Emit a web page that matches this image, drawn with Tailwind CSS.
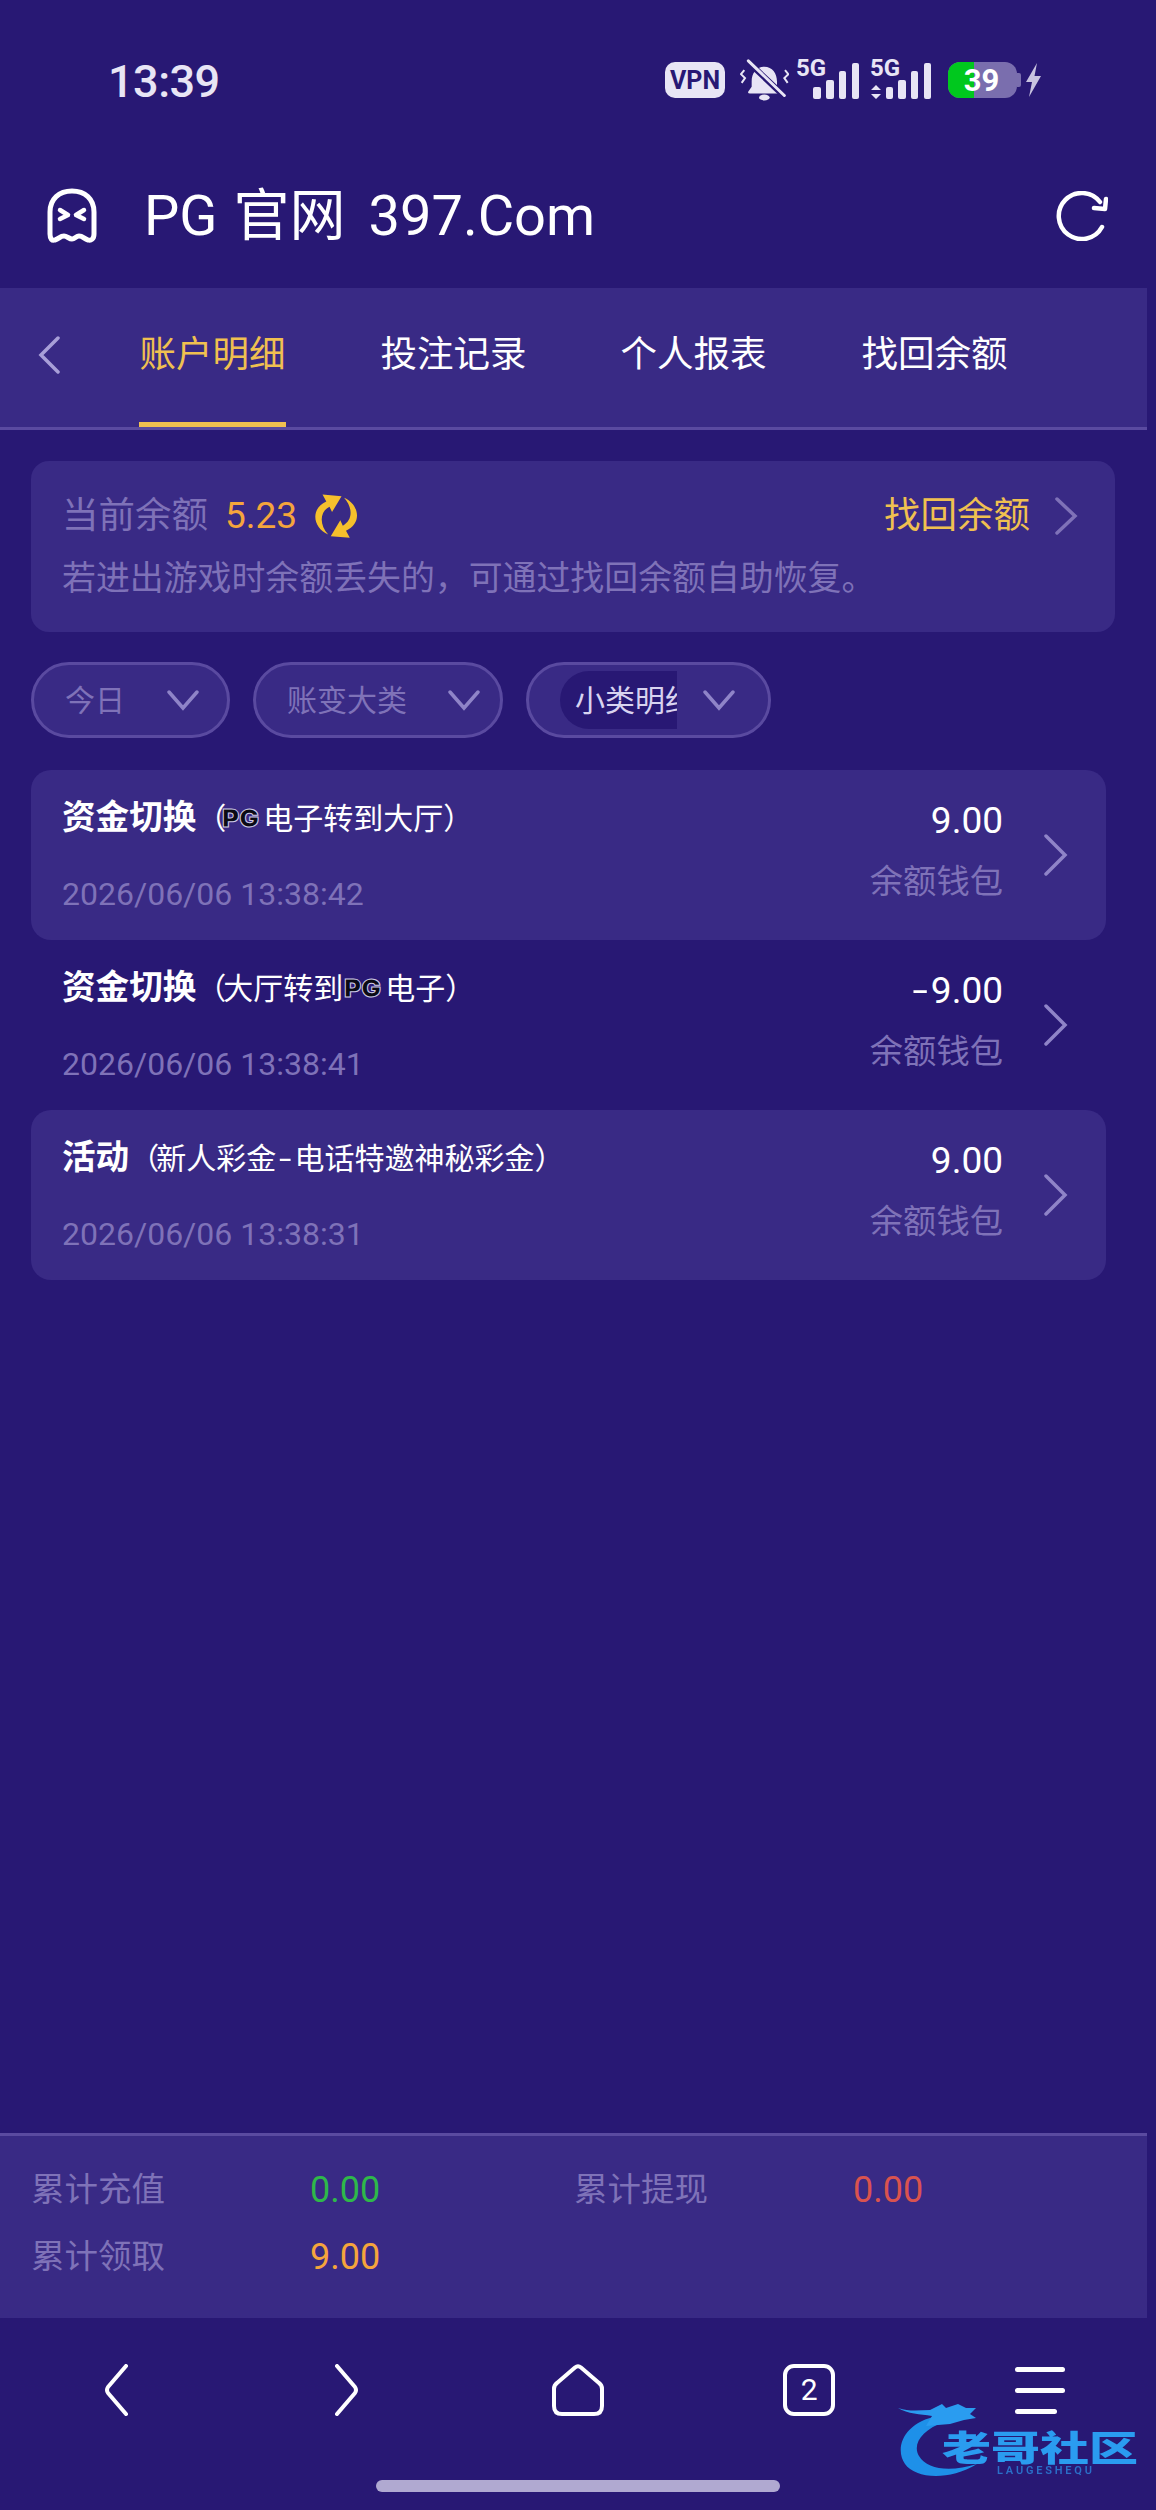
<!DOCTYPE html>
<html lang="zh-CN">

<head>
    <meta charset="UTF-8">
    <meta name="viewport" content="width=device-width, initial-scale=1.0">
    <title>PG官网 397.Com</title>
    <script src="https://cdn.jsdelivr.net/npm/@tailwindcss/browser@4"></script>
</head>

<body class="bg-[#281874]">
    <div class="relative flex flex-col w-[1156px] h-[2510px] overflow-hidden bg-[#281874] font-['Roboto','Noto_Sans_CJK_SC',sans-serif]">

        <!-- Status bar -->
        <div class="flex items-center h-[160px] pl-[108px] pr-[114px] py-[58px] text-[#e8e5f5]">
            <span class="mt-[3px] text-[45px] font-medium leading-none tracking-[-0.5px]">13:39</span>
            <div class="flex items-center ml-auto">
                <span class="flex items-center justify-center w-[60px] h-[36px] rounded-[10px] bg-[#e8e5f5] text-[#281874] text-[25px] font-bold leading-none">VPN</span>
                <svg class="ml-[15px]" width="49" height="42" viewBox="305 55 147 125">
                    <path d="M378 78c-24 0-38 20-38 44v16l-10 14q-3 6 5 6h86q8 0 5-6l-10-14v-16c0-24-14-44-38-44z" fill="#e8e5f5" />
                    <ellipse cx="378" cy="170" rx="16" ry="9" fill="#e8e5f5" />
                    <path d="M322 56L442 170" stroke="#281874" stroke-width="18" />
                    <path d="M330 60L438 164" stroke="#e8e5f5" stroke-width="9" stroke-linecap="round" />
                    <path d="M318 88l-10 12 12 12-10 14M440 88l10 12-12 12 10 14" fill="none" stroke="#e8e5f5" stroke-width="6" />
                </svg>
                <svg class="ml-[7px] overflow-visible" width="64" height="44" viewBox="0 0 64 44">
                    <text x="0" y="18" font-size="24" font-weight="700" fill="#e8e5f5" font-family="Roboto">5G</text>
                    <rect x="17" y="29" width="8" height="12" rx="2" fill="#e8e5f5" />
                    <rect x="30" y="22" width="8" height="19" rx="2" fill="#e8e5f5" />
                    <rect x="43" y="13" width="7" height="28" rx="2" fill="#e8e5f5" />
                    <rect x="56" y="5" width="7" height="36" rx="2" fill="#e8e5f5" />
                </svg>
                <svg class="ml-[10px] overflow-visible" width="62" height="44" viewBox="0 0 62 44">
                    <text x="0" y="18" font-size="24" font-weight="700" fill="#e8e5f5" font-family="Roboto">5G</text>
                    <path d="M1 32l5-5 5 5zM1 36l5 5 5-5z" fill="#e8e5f5" />
                    <rect x="16" y="29" width="7" height="12" rx="2" fill="#e8e5f5" />
                    <rect x="28" y="22" width="8" height="19" rx="2" fill="#e8e5f5" />
                    <rect x="41" y="13" width="7" height="28" rx="2" fill="#e8e5f5" />
                    <rect x="54" y="5" width="7" height="36" rx="2" fill="#e8e5f5" />
                </svg>
                <div class="relative flex items-center justify-center ml-[16px] w-[69px] h-[36px] rounded-[12px] overflow-hidden bg-[#7a6eae]">
                    <div class="absolute left-0 top-0 bottom-0 w-[26px] bg-[#00c81e]"></div>
                    <span class="relative text-white text-[31px] font-bold leading-none pr-[2px]">39</span>
                </div>
                <div class="w-[4px] h-[14px] rounded-r-[2px] bg-[#7a6eae]"></div>
                <svg class="ml-[4px]" width="17" height="34" viewBox="0 0 17 34">
                    <path d="M12 0L1 19h6L4 34l12-21H9.500z" fill="#c8c3e0" />
                </svg>
            </div>
        </div>

        <!-- Title bar -->
        <div class="flex items-center h-[128px] pb-[16px] pl-[47px] pr-[48px]">
            <svg width="50" height="56" viewBox="0 0 50 56" fill="none" stroke="white" stroke-width="5" stroke-linecap="round" stroke-linejoin="round">
                <path d="M3 24C3 11 12 3 25 3s22 8 22 21v22c0 5-3 7-6 6-4-1-5-4-9-4-3 0-4 3-7 3s-5-3-8-3c-4 0-5 3-9 4-3 1-5-1-5-6z" />
                <path d="M13 22l8 5-8 4M37 22l-8 5 8 4" stroke-width="4.500" />
            </svg>
            <span class="ml-[47px] text-[56px] leading-none text-white whitespace-nowrap">PG<span class="ml-[16px]">官网</span><span class="ml-[23px]">397.Com</span></span>
            <svg class="ml-auto" width="52" height="50" viewBox="0 0 52 50" fill="none" stroke="white" stroke-width="4.500" stroke-linecap="round" stroke-linejoin="round">
                <path d="M46 36A23 23 0 1 1 44 11" />
                <path d="M50 8L49 18L38 17" />
            </svg>
        </div>

        <!-- Tabs -->
        <div class="flex items-stretch w-[1147px] h-[142px] pl-[38px] bg-[#392a85] border-b-[3px] border-[#5a4aa0]">
            <svg class="self-center mb-[5px]" width="22" height="38" viewBox="0 0 22 38" fill="none" stroke="#a89fd8" stroke-width="3.500" stroke-linecap="round">
                <path d="M20 2L3 19l17 17" />
            </svg>
            <a class="flex items-center justify-center w-[147px] ml-[79px] pt-[1px] border-b-[5px] border-[#f0c050] text-[36.500px] whitespace-nowrap text-[#f0c050]">账户明细</a>
            <a class="flex items-center justify-center w-[147px] ml-[94px] pt-[1px] border-b-[5px] border-transparent text-[36.500px] whitespace-nowrap text-white">投注记录</a>
            <a class="flex items-center justify-center w-[147px] ml-[93px] pt-[1px] border-b-[5px] border-transparent text-[36.500px] whitespace-nowrap text-white">个人报表</a>
            <a class="flex items-center justify-center w-[147px] ml-[94px] pt-[1px] border-b-[5px] border-transparent text-[36.500px] whitespace-nowrap text-white">找回余额</a>
        </div>

        <!-- Balance card -->
        <div class="ml-[31px] mt-[31px] w-[1084px] h-[171px] px-[31px] pt-[33px] rounded-[18px] bg-[#392a85]">
            <div class="flex items-center h-[44px]">
                <span class="text-[36.500px] text-[#7f72b8]">当前余额</span>
                <span class="ml-[17px] text-[37px] text-[#f5a53c]">5.23</span>
                <svg class="ml-[16px]" width="46" height="46" viewBox="70 35 145 145" fill="#f6c02c">
                    <path d="M118 166C70 145 60 85 112 62L100 40L160 45L130 95L122 78C90 95 90 135 118 166Z" />
                    <path d="M168 50C216 71 226 131 174 154L186 176L126 171L156 121L164 138C196 121 196 81 168 50Z" />
                </svg>
                <span class="ml-auto text-[36.500px] text-[#f0c050]">找回余额</span>
                <svg class="ml-[24px] mr-[6px]" width="24" height="38" viewBox="0 0 24 38" fill="none" stroke="#7f72b8" stroke-width="3.500" stroke-linecap="round">
                    <path d="M3 2l18 17L3 36" />
                </svg>
            </div>
            <p class="mt-[19px] h-[44px] flex items-center text-[33.900px] text-[#7f72b8] whitespace-nowrap">若进出游戏时余额丢失的，可通过找回余额自助恢复。</p>
        </div>

        <!-- Filters -->
        <div class="flex ml-[31px] mt-[30px] gap-[23px]">
            <div class="flex items-center w-[199px] h-[76px] pl-[31px] rounded-full border-[3px] border-[#5a4aa0] bg-[#392a85] text-[30px] text-[#7f72b8]">
                <span>今日</span>
                <svg class="ml-[42px]" width="32" height="22" viewBox="0 0 32 22" fill="none" stroke="#8f84c8" stroke-width="3.500" stroke-linecap="round">
                    <path d="M2 3l14 16L30 3" />
                </svg>
            </div>
            <div class="flex items-center w-[250px] h-[76px] pl-[31px] rounded-full border-[3px] border-[#5a4aa0] bg-[#392a85] text-[30px] text-[#7f72b8]">
                <span>账变大类</span>
                <svg class="ml-[41px]" width="32" height="22" viewBox="0 0 32 22" fill="none" stroke="#8f84c8" stroke-width="3.500" stroke-linecap="round">
                    <path d="M2 3l14 16L30 3" />
                </svg>
            </div>
            <div class="flex items-center w-[245px] h-[76px] pl-[31px] rounded-full border-[3px] border-[#5a4aa0] bg-[#392a85] text-[30px] text-[#d8d3f0]">
                <div class="w-[117px] h-[58px] pl-[15px] flex items-center overflow-hidden whitespace-nowrap rounded-l-[29px] bg-[#281874]">小类明细</div>
                <svg class="ml-[26px]" width="32" height="22" viewBox="0 0 32 22" fill="none" stroke="#8f84c8" stroke-width="3.500" stroke-linecap="round">
                    <path d="M2 3l14 16L30 3" />
                </svg>
            </div>
        </div>

        <!-- Records -->
        <div class="ml-[31px] mt-[32px] w-[1075px]">
            <div class="flex items-center h-[170px] pl-[31px] pr-[38px] rounded-[20px] bg-[#392a85]">
                <div class="pt-[2px]">
                    <div class="flex items-center h-[44px] whitespace-nowrap text-white">
                        <span class="text-[33.600px] font-bold">资金切换</span>
                        <span class="text-[30px]">（</span>
                        <svg width="38" height="22" viewBox="0 0 38 22" class="-ml-[4px] overflow-visible">
                            <text x="0" y="19" font-size="25" font-weight="900" font-family="Inter" fill="#0a0a14" stroke="#cfcbe6" stroke-width="1" textLength="37" lengthAdjust="spacingAndGlyphs">PG</text>
                        </svg>
                        <span class="ml-[3px] text-[30px]">电子转到大厅）</span>
                    </div>
                    <div class="mt-[31px] text-[32px] leading-[44px] text-[#7f72b8]">2026/06/06 13:38:42</div>
                </div>
                <div class="ml-auto flex flex-col items-end pb-[7px]">
                    <span class="text-[37px] leading-[44px] text-white">9.00</span>
                    <span class="mt-[17px] text-[33.300px] leading-[44px] text-[#7f72b8]">余额钱包</span>
                </div>
                <svg class="ml-[40px]" width="25" height="42" viewBox="0 0 25 42" fill="none" stroke="#8f84c8" stroke-width="3.500" stroke-linecap="round">
                    <path d="M3 2l19 19L3 40" />
                </svg>
            </div>

            <div class="flex items-center h-[170px] pl-[31px] pr-[38px]">
                <div class="pt-[2px]">
                    <div class="flex items-center h-[44px] whitespace-nowrap text-white">
                        <span class="text-[33.600px] font-bold">资金切换</span>
                        <span class="text-[30px]">（</span>
                        <span class="-ml-[3px] text-[30px]">大厅转到</span>
                        <svg width="38" height="22" viewBox="0 0 38 22" class="ml-[1px] overflow-visible">
                            <text x="0" y="19" font-size="25" font-weight="900" font-family="Inter" fill="#0a0a14" stroke="#cfcbe6" stroke-width="1" textLength="37" lengthAdjust="spacingAndGlyphs">PG</text>
                        </svg>
                        <span class="ml-[3px] text-[30px]">电子）</span>
                    </div>
                    <div class="mt-[31px] text-[32px] leading-[44px] text-[#7f72b8]">2026/06/06 13:38:41</div>
                </div>
                <div class="ml-auto flex flex-col items-end pb-[7px]">
                    <span class="text-[37px] leading-[44px] text-white"><span class="inline-block mr-[6px] scale-x-[1.5]">-</span>9.00</span>
                    <span class="mt-[17px] text-[33.300px] leading-[44px] text-[#7f72b8]">余额钱包</span>
                </div>
                <svg class="ml-[40px]" width="25" height="42" viewBox="0 0 25 42" fill="none" stroke="#8f84c8" stroke-width="3.500" stroke-linecap="round">
                    <path d="M3 2l19 19L3 40" />
                </svg>
            </div>

            <div class="flex items-center h-[170px] pl-[31px] pr-[38px] rounded-[20px] bg-[#392a85]">
                <div class="pt-[2px]">
                    <div class="flex items-center h-[44px] whitespace-nowrap text-white">
                        <span class="text-[33.600px] font-bold">活动</span>
                        <span class="text-[30px]">（</span>
                        <span class="-ml-[3px] text-[30px]">新人彩金<span class="inline-block mx-[5px] scale-x-[1.5]">-</span>电话特邀神秘彩金）</span>
                    </div>
                    <div class="mt-[31px] text-[32px] leading-[44px] text-[#7f72b8]">2026/06/06 13:38:31</div>
                </div>
                <div class="ml-auto flex flex-col items-end pb-[7px]">
                    <span class="text-[37px] leading-[44px] text-white">9.00</span>
                    <span class="mt-[17px] text-[33.300px] leading-[44px] text-[#7f72b8]">余额钱包</span>
                </div>
                <svg class="ml-[40px]" width="25" height="42" viewBox="0 0 25 42" fill="none" stroke="#8f84c8" stroke-width="3.500" stroke-linecap="round">
                    <path d="M3 2l19 19L3 40" />
                </svg>
            </div>
        </div>

        <!-- Totals -->
        <div class="mt-auto grid grid-cols-[279px_264px_279px_auto] content-start gap-y-[23px] w-[1147px] h-[185px] pl-[31px] pt-[32px] border-t-[3px] border-[#5a4aa0] bg-[#392a85] text-[33.500px] leading-[44px]">
            <span class="text-[#7f72b8]">累计充值</span>
            <span class="text-[36px] text-[#2fb84a]">0.00</span>
            <span class="text-[#7f72b8]">累计提现</span>
            <span class="text-[36px] text-[#d9534f]">0.00</span>
            <span class="text-[#7f72b8]">累计领取</span>
            <span class="text-[36px] text-[#f5a53c]">9.00</span>
        </div>

        <!-- Browser toolbar -->
        <div class="grid grid-cols-5 justify-items-center items-center h-[52px] mt-[46px]">
            <svg width="24" height="52" viewBox="0 0 24 52" fill="none" stroke="white" stroke-width="4" stroke-linecap="round" stroke-linejoin="round">
                <path d="M22 2L4 23q-2 3 0 6l18 21" />
            </svg>
            <svg width="24" height="52" viewBox="0 0 24 52" fill="none" stroke="white" stroke-width="4" stroke-linecap="round" stroke-linejoin="round">
                <path d="M2 2l18 21q2 3 0 6L2 50" />
            </svg>
            <svg width="52" height="52" viewBox="0 0 52 52" fill="none" stroke="white" stroke-width="4" stroke-linejoin="round">
                <path d="M23 3.500Q26 1 29 3.500L47 19Q50 21 50 25V42Q50 50 42 50H10Q2 50 2 42V25Q2 21 5 19Z" />
            </svg>
            <div class="flex items-center justify-center w-[52px] h-[52px] rounded-[11px] border-[4px] border-white text-white text-[30px] leading-none">2</div>
            <div class="flex flex-col gap-[16px] w-[50px]">
                <div class="h-[5px] rounded-full bg-white"></div>
                <div class="h-[5px] rounded-full bg-white"></div>
                <div class="h-[5px] w-[42px] rounded-full bg-white"></div>
            </div>
        </div>

        <!-- Home indicator -->
        <div class="w-[404px] h-[12px] mx-auto mt-[64px] mb-[18px] rounded-full bg-[#b0a9d1]"></div>

        <!-- Watermark logo -->
        <div class="absolute left-[896px] top-[2400px] w-[250px] h-[90px] blur-[0.7px]">
            <svg class="absolute left-0 top-0" width="100" height="82" viewBox="0 0 100 82">
                <path d="M42 16C8 22-2 48 9 64c10 14 42 18 72 0-26 8-50 6-58-8C16 44 26 30 48 22z" fill="#1e90e8" />
                <path d="M2 8c12 4 22 2 32 2l12-6 4 4 12-4 8 4 10 0-6 6 6 4-12 2-14 4-24 2 6-10C24 14 12 14 2 8z" fill="#2a9cf0" />
            </svg>
            <span class="absolute left-[46px] top-[31px] origin-top scale-y-[0.72] text-[49px] leading-[50px] font-black whitespace-nowrap text-[#2a9cf0]">老哥社区</span>
            <span class="absolute left-[101px] top-[65px] text-[11px] leading-[12px] tracking-[2.800px] font-semibold whitespace-nowrap text-[#2a6fc8]">LAUGESHEQU</span>
        </div>
    </div>
</body>

</html>
